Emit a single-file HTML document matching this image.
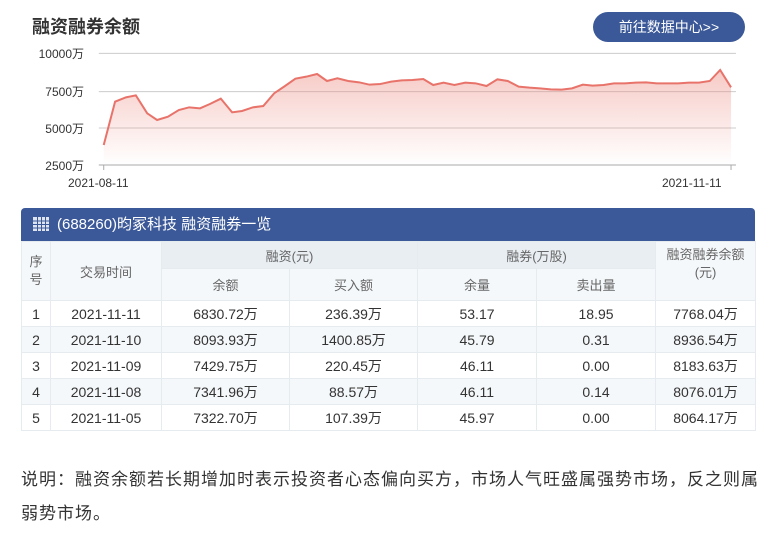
<!DOCTYPE html>
<html><head><meta charset="utf-8"><style>
body{margin:0;width:774px;height:544px;background:#fff;font-family:"Liberation Sans","Noto Sans CJK SC",sans-serif;color:#333;position:relative;overflow:hidden}
.a{position:absolute}
.title{left:32px;top:13px;font-size:18px;font-weight:bold;color:#333}
.btn{left:593px;top:12px;width:152px;height:30px;border-radius:15px;background:#3b5998;color:#fff;font-size:14px;line-height:30px;text-align:center}
.yl{font-size:12px;color:#333;width:60px;text-align:right;left:24px}
.tb{left:21px;top:208px;width:734px}
.hd{height:33px;background:#3b5998;border-radius:4px 4px 0 0;color:#fff;font-size:15px;line-height:33px;padding-left:12px}
table{border-collapse:collapse;width:734px;font-size:14px;table-layout:fixed}
td{text-align:center;padding:0;border:1px solid #e6ebf0}
.h td{background:#f5f8fa;color:#666;font-size:13px}
.h td.g{background:#e9eef3}
.d td{height:25px;color:#333}
.d.e td{background:#f5f8fa}
.note{left:21px;top:463px;width:740px;font-size:17px;letter-spacing:1px;line-height:34px;color:#333}
</style></head><body>
<div class="a title">融资融券余额</div>
<div class="a btn">前往数据中心&gt;&gt;</div>
<div class="a yl" style="top:45px">10000万</div>
<div class="a yl" style="top:83px">7500万</div>
<div class="a yl" style="top:120px">5000万</div>
<div class="a yl" style="top:157px">2500万</div>
<div class="a" style="left:68px;top:176px;font-size:12px">2021-08-11</div>
<div class="a" style="left:662px;top:176px;font-size:12px">2021-11-11</div>
<svg class="a" style="left:0;top:0" width="774" height="200" viewBox="0 0 1567 600" preserveAspectRatio="none">
<defs><linearGradient id="gr" x1="0" y1="0" x2="0" y2="1"><stop offset="0" stop-color="#ec8a80" stop-opacity=".45"/><stop offset="1" stop-color="#ec8a80" stop-opacity="0"/></linearGradient></defs>
<g stroke="#ccc" stroke-width="1">
<line x1="200" y1="160" x2="1490" y2="160" vector-effect="non-scaling-stroke"/>
<line x1="200" y1="275" x2="1490" y2="275" vector-effect="non-scaling-stroke"/>
<line x1="200" y1="384" x2="1490" y2="384" vector-effect="non-scaling-stroke"/>
<line x1="200" y1="495" x2="1490" y2="495" stroke="#aaa" vector-effect="non-scaling-stroke"/>
<line x1="210" y1="495" x2="210" y2="510" stroke="#aaa" vector-effect="non-scaling-stroke"/>
<line x1="1480" y1="495" x2="1480" y2="510" stroke="#aaa" vector-effect="non-scaling-stroke"/>
</g>
<path fill="url(#gr)" d="M210,435 L233,305 255,292 275,286 298,340 318,360 340,350 362,330 383,322 405,325 425,312 447,296 470,337 490,333 512,322 533,318 555,280 577,258 598,236 620,230 642,222 662,243 683,235 705,243 727,247 748,254 770,252 792,245 813,241 835,240 857,237 877,255 898,248 920,255 942,248 963,250 985,258 1007,238 1028,243 1050,260 1072,263 1093,265 1115,268 1137,269 1158,265 1180,254 1200,257 1222,255 1243,250 1265,250 1287,248 1308,247 1330,250 1352,250 1373,250 1395,248 1415,248 1437,243 1458,210 1480,262 L1480,495 L210,495Z"/>
<path fill="none" stroke="#e8736a" stroke-width="2" vector-effect="non-scaling-stroke" d="M210,435 L233,305 255,292 275,286 298,340 318,360 340,350 362,330 383,322 405,325 425,312 447,296 470,337 490,333 512,322 533,318 555,280 577,258 598,236 620,230 642,222 662,243 683,235 705,243 727,247 748,254 770,252 792,245 813,241 835,240 857,237 877,255 898,248 920,255 942,248 963,250 985,258 1007,238 1028,243 1050,260 1072,263 1093,265 1115,268 1137,269 1158,265 1180,254 1200,257 1222,255 1243,250 1265,250 1287,248 1308,247 1330,250 1352,250 1373,250 1395,248 1415,248 1437,243 1458,210 1480,262"/>
</svg>
<div class="a tb">
<div class="hd"><svg width="16" height="14" style="vertical-align:-2px;margin-right:8px" viewBox="0 0 16 14"><rect x="0" y="0" width="16" height="14" fill="#dfe5ee"/><g fill="#3b5998"><rect x="0" y="3.5" width="16" height="1"/><rect x="0" y="7" width="16" height="1"/><rect x="0" y="10.5" width="16" height="1"/><rect x="4" y="0" width="1" height="14"/><rect x="8" y="0" width="1" height="14"/><rect x="12" y="0" width="1" height="14"/></g></svg>(688260)昀冢科技 融资融券一览</div>
<table>
<colgroup><col style="width:29px"><col style="width:111px"><col style="width:128px"><col style="width:128px"><col style="width:119px"><col style="width:119px"><col style="width:100px"></colgroup>
<tr class="h" style="height:27px"><td rowspan="2" style="line-height:18px">序<br>号</td><td rowspan="2">交易时间</td><td colspan="2" class="g">融资(元)</td><td colspan="2" class="g">融券(万股)</td><td rowspan="2" style="line-height:18px;vertical-align:top;padding-top:4px">融资融券余额<br>(元)</td></tr>
<tr class="h" style="height:32px"><td>余额</td><td>买入额</td><td>余量</td><td>卖出量</td></tr>
<tr class="d"><td>1</td><td>2021-11-11</td><td>6830.72万</td><td>236.39万</td><td>53.17</td><td>18.95</td><td>7768.04万</td></tr>
<tr class="d e"><td>2</td><td>2021-11-10</td><td>8093.93万</td><td>1400.85万</td><td>45.79</td><td>0.31</td><td>8936.54万</td></tr>
<tr class="d"><td>3</td><td>2021-11-09</td><td>7429.75万</td><td>220.45万</td><td>46.11</td><td>0.00</td><td>8183.63万</td></tr>
<tr class="d e"><td>4</td><td>2021-11-08</td><td>7341.96万</td><td>88.57万</td><td>46.11</td><td>0.14</td><td>8076.01万</td></tr>
<tr class="d"><td>5</td><td>2021-11-05</td><td>7322.70万</td><td>107.39万</td><td>45.97</td><td>0.00</td><td>8064.17万</td></tr>
</table>
</div>
<div class="a note">说明：融资余额若长期增加时表示投资者心态偏向买方，市场人气旺盛属强势市场，反之则属弱势市场。</div>
</body></html>
